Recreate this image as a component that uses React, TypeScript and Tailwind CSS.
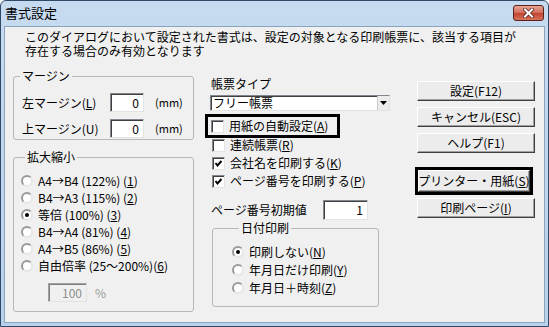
import React from "react";

const font = "font-['Noto_Sans_CJK_JP','Noto_Sans_CJK_SC',sans-serif]";

// 3D sunken edge used by inputs, checkboxes and the combo box
const sunken = "border border-[#828790] border-r-[#e3e3e3] border-b-[#e3e3e3] shadow-[inset_1px_1px_0_#404040] bg-white";

const Radio = ({ checked, disabled }: { checked?: boolean; disabled?: boolean }) => (
  <span
    className={`relative w-[12px] h-[12px] shrink-0 rounded-full border-2 border-t-[#9a9a9a] border-l-[#9a9a9a] border-r-[#e6e6e6] border-b-[#e6e6e6] ${
      disabled ? "bg-[#f0f0f0]" : "bg-white"
    } flex items-center justify-center`}
  >
    {checked && <span className="w-[4px] h-[4px] rounded-full bg-black" />}
  </span>
);

const Check = ({ checked }: { checked?: boolean }) => (
  <span className={`w-[13px] h-[13px] shrink-0 flex items-center justify-center ${sunken}`}>
    {checked && (
      <svg width="9" height="9" viewBox="0 0 9 9">
        <path d="M1.5 4 L3.5 6.5 L7.5 2" fill="none" stroke="#000" strokeWidth="2" />
      </svg>
    )}
  </span>
);

const Btn = ({ children, className = "" }: { children: React.ReactNode; className?: string }) => (
  <div
    className={`flex items-center justify-center bg-[#ececec] border border-t-white border-l-white border-r-[#404040] border-b-[#404040] shadow-[inset_-1px_-1px_0_#a0a0a0] text-[12px] ${className}`}
  >
    <span className="whitespace-nowrap leading-[14px]">{children}</span>
  </div>
);

const RadioRow = ({ checked, children }: { checked?: boolean; children: React.ReactNode }) => (
  <div className="h-[17px] flex items-center gap-[5px]">
    <Radio checked={checked} />
    <span className="leading-[14px] whitespace-nowrap">{children}</span>
  </div>
);

const CheckRow = ({ checked, children }: { checked?: boolean; children: React.ReactNode }) => (
  <div className="h-[18px] flex items-center gap-[5px]">
    <Check checked={checked} />
    <span className="leading-[14px] whitespace-nowrap">{children}</span>
  </div>
);

export default function App() {
  return (
    <div className={`w-[549px] h-[327px] ${font} text-[12px] text-black`}>
      <div className="w-full h-full flex flex-col border border-[#2f4a66] rounded-t-[6px] bg-[linear-gradient(#c7dbf0,#b9d1ea)] px-[3px] pb-[3px]">
        {/* title bar */}
        <div className="h-[25px] shrink-0 flex items-start justify-between">
          <span className="pl-[1px] pt-[5px] text-[13px] leading-[14px]">書式設定</span>
          <div className="mt-[4px] mr-[1px] w-[31px] h-[16px] rounded-[3px] border border-[#5d2219] bg-[linear-gradient(#e8a597,#d06a58_50%,#c0432f_51%,#d6735c)] flex items-center justify-center">
            <svg width="11" height="10" viewBox="0 0 11 10">
              <path d="M2 1.5 L9 8.5 M9 1.5 L2 8.5" stroke="#5a2019" strokeWidth="3.6" strokeLinecap="square" />
              <path d="M2 1.5 L9 8.5 M9 1.5 L2 8.5" stroke="#fff" strokeWidth="2" strokeLinecap="square" />
            </svg>
          </div>
        </div>

        {/* client area */}
        <div className="flex-1 border border-[#8aa3bf] bg-[#f0f0f0] flex flex-col">
          <div className="pt-[3px] pl-[20px] leading-[14px]">
            <div>このダイアログにおいて設定された書式は、設定の対象となる印刷帳票に、該当する項目が</div>
            <div>存在する場合のみ有効となります</div>
          </div>

          <div className="mt-[11px] pl-[8px] flex items-start">
            {/* left column */}
            <div className="w-[181px] flex flex-col">
              <fieldset className="border border-[#b7b7b7] rounded-[3px] pt-[10px] pb-[1px] flex flex-col gap-[7px]">
                <legend className="ml-[6px] px-[2px] leading-[14px]">マージン</legend>
                <div className="flex items-center pl-[8px]">
                  <span className="w-[88px] leading-[14px]">
                    左マージン(<u>L</u>)
                  </span>
                  <div className={`w-[34px] h-[19px] ${sunken} text-right pr-[4px] leading-[17px]`}>0</div>
                  <span className="ml-[11px] text-[11px]">(mm)</span>
                </div>
                <div className="flex items-center pl-[8px]">
                  <span className="w-[88px] leading-[14px]">上マージン(U)</span>
                  <div className={`w-[34px] h-[19px] ${sunken} text-right pr-[4px] leading-[17px]`}>0</div>
                  <span className="ml-[11px] text-[11px]">(mm)</span>
                </div>
              </fieldset>

              <fieldset className="mt-[10px] border border-[#b7b7b7] rounded-[3px] pt-[8px] pb-[9px] pl-[7px] flex flex-col">
                <legend className="ml-[4px] px-[2px] leading-[14px]">拡大縮小</legend>
                <RadioRow>
                  A4→B4 (122%) (<u>1</u>)
                </RadioRow>
                <RadioRow>
                  B4→A3 (115%) (<u>2</u>)
                </RadioRow>
                <RadioRow checked>
                  等倍 (100%) (<u>3</u>)
                </RadioRow>
                <RadioRow>
                  B4→A4 (81%) (<u>4</u>)
                </RadioRow>
                <RadioRow>
                  A4→B5 (86%) (<u>5</u>)
                </RadioRow>
                <RadioRow>
                  自由倍率 (25～200%)(<u>6</u>)
                </RadioRow>
                <div className="mt-[9px] pl-[27px] flex items-center">
                  <div className="w-[39px] h-[19px] border border-[#a0a0a0] border-r-[#e3e3e3] border-b-[#e3e3e3] shadow-[inset_1px_1px_0_#808080] bg-[#f0f0f0] text-[#8d8d8d] text-right pr-[4px] leading-[17px]">
                    100
                  </div>
                  <span className="ml-[8px] text-[#9a9a9a]">%</span>
                </div>
              </fieldset>
            </div>

            {/* middle column */}
            <div className="ml-[11px] w-[185px] flex flex-col">
              <span className="mt-[8px] pl-[6px] leading-[14px]">帳票タイプ</span>
              <div className={`mt-[4px] ml-[5px] w-[180px] h-[16px] flex items-center ${sunken}`}>
                <span className="flex-1 pl-[2px] leading-[14px]">フリー帳票</span>
                <div className="w-[12px] h-full flex items-center justify-center bg-[#ececec] border-l border-[#c8c8c8]">
                  <svg width="7" height="4" viewBox="0 0 7 4">
                    <path d="M0 0 H7 L3.5 4 Z" fill="#000" />
                  </svg>
                </div>
              </div>

              <div className="mt-[3px] -mb-[2px] w-[135px] border-[3px] border-black pl-[3px]">
                <CheckRow>
                  用紙の自動設定(<u>A</u>)
                </CheckRow>
              </div>
              <div className="pl-[7px] flex flex-col">
                <CheckRow>
                  連続帳票(<u>R</u>)
                </CheckRow>
                <CheckRow checked>
                  会社名を印刷する(<u>K</u>)
                </CheckRow>
                <CheckRow checked>
                  ページ番号を印刷する(<u>P</u>)
                </CheckRow>
              </div>

              <div className="mt-[10px] pl-[6px] flex items-center">
                <span className="w-[112px] leading-[14px]">ページ番号初期値</span>
                <div className={`w-[45px] h-[20px] ${sunken} text-right pr-[4px] leading-[18px]`}>1</div>
              </div>

              <fieldset className="mt-[1px] ml-[7px] w-[167px] border border-[#b7b7b7] rounded-[3px] pt-[8px] pb-[9px] pl-[19px] flex flex-col">
                <legend className="ml-[7px] px-[2px] leading-[14px]">日付印刷</legend>
                <div className="h-[18px] flex items-center gap-[5px]">
                  <Radio checked />
                  <span className="leading-[14px]">
                    印刷しない(<u>N</u>)
                  </span>
                </div>
                <div className="h-[18px] flex items-center gap-[5px]">
                  <Radio />
                  <span className="leading-[14px]">
                    年月日だけ印刷(<u>Y</u>)
                  </span>
                </div>
                <div className="h-[18px] flex items-center gap-[5px]">
                  <Radio />
                  <span className="leading-[14px]">
                    年月日＋時刻(<u>Z</u>)
                  </span>
                </div>
              </fieldset>
            </div>

            {/* right column: buttons */}
            <div className="ml-[25px] w-[121px] flex flex-col">
              <Btn className="mt-[12px] ml-[2px] w-[118px] h-[20px]">設定(F12)</Btn>
              <Btn className="mt-[6px] ml-[2px] w-[118px] h-[20px]">キャンセル(ESC)</Btn>
              <Btn className="mt-[6px] ml-[2px] w-[118px] h-[20px]">ヘルプ(F1)</Btn>
              <div className="mt-[14px] w-[118px] border-[3px] border-black">
                <Btn className="h-[22px] w-full">
                  プリンター・用紙(<u>S</u>)
                </Btn>
              </div>
              <Btn className="mt-[3px] ml-[2px] w-[118px] h-[20px]">
                印刷ページ(<u>I</u>)
              </Btn>
            </div>
          </div>
        </div>
      </div>
    </div>
  );
}
